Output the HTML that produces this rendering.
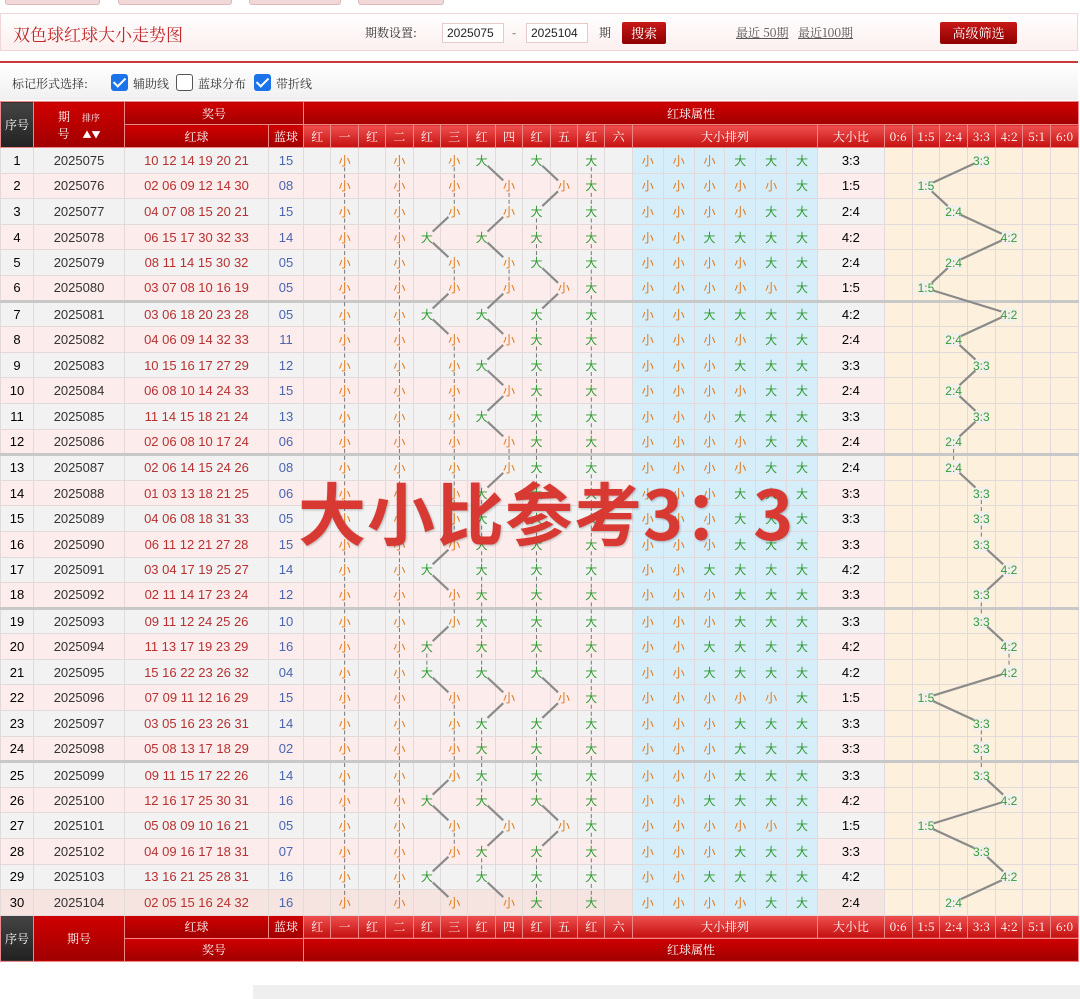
<!DOCTYPE html>
<html><head><meta charset="utf-8">
<style>
*{margin:0;padding:0;box-sizing:border-box}
body{width:1080px;height:999px;background:#fff;font-family:"Liberation Sans","Noto Sans CJK SC",sans-serif;position:relative;overflow:hidden}
.tab{position:absolute;top:0;height:5px;background:#f0d8d8;border:1px solid #e0b8b8;border-top:none;border-radius:0 0 3px 3px}
.top{position:absolute;left:0;top:13px;width:1078px;height:38px;border:1px solid #f0d6d6;background:linear-gradient(#fff,#fcefef);font-family:"Noto Serif CJK SC",serif}
.title{position:absolute;left:12px;top:7px;font-size:17px;color:#c0282a}
.lbl{position:absolute;top:10px;font-size:12px;color:#333}
.inp{position:absolute;top:9px;height:20px;width:62px;border:1px solid #e6caca;background:#fff;font:12px "Liberation Sans",sans-serif;color:#222;padding:2px 0 0 4px}
.btn{position:absolute;top:8px;height:22px;background:linear-gradient(#c81818,#8e0000);color:#fff;font-size:13px;text-align:center;line-height:21px;border-radius:2px}
.lk{position:absolute;top:10px;font-size:12px;color:#555;text-decoration:underline}
.redline{position:absolute;left:0;top:61px;width:1078px;height:2px;background:#c83a3a}
.opt{position:absolute;left:0;top:64px;width:1078px;height:36px;background:linear-gradient(#fff,#f0f0f0);font-family:"Noto Serif CJK SC",serif;font-size:12px;color:#333}
.cb{position:absolute;top:10px;width:17px;height:17px;border-radius:3px}
.cb.on{background:#1a73e8}
.cb.on:after{content:"";position:absolute;left:5px;top:1px;width:5px;height:10px;border:solid #fff;border-width:0 2px 2px 0;transform:rotate(45deg)}
.cb.off{border:1px solid #555;background:#fff}
table{position:absolute;left:0;top:101px;width:1078px;border-collapse:collapse;table-layout:fixed;font-size:13px}
td,th{text-align:center;border:1px solid #e2dada;padding:0;white-space:nowrap;overflow:hidden}
th{color:#fff;font-weight:normal;font-family:"Noto Serif CJK SC",serif;font-size:12px;background:linear-gradient(#d00000,#a00000);border:1px solid #e88;height:23px}
th.l{background:linear-gradient(#f05050,#c41010)}
th.d{background:linear-gradient(#444,#222)}
tbody tr{height:25.6px}
tbody tr:nth-child(odd){background:#f2f2f2}
tbody tr:nth-child(even){background:#fcecec}
tbody tr.last{background:#f6e4e1}
tr.sep td{border-top:3px solid #c8c8c8}
td.q{color:#333}
td.r{color:#b83030}
td.b{color:#4a64b0}
.s{color:#e07a1c;font-size:12px}
.x{color:#2f9a2f;font-size:12px}
td.bl{background:#d6edfa}
td.rt{background:#fdf0dc}
td i{font-style:normal;color:#3a9a3a;font-size:12px;background:rgba(240,240,240,.8)}
.wm{position:absolute;left:298px;top:466px;font-size:68px;font-weight:bold;color:#d83a33;font-family:"Noto Sans CJK SC",sans-serif;letter-spacing:1px;text-shadow:1px 1px 2px rgba(0,0,0,.25);line-height:90px}
svg{position:absolute;left:0;top:0;pointer-events:none}
.bot{position:absolute;left:0;top:985px;width:1080px;height:14px;background:#efefef}
.bot div{width:253px;height:14px;background:#fff}
</style></head><body>
<div class="tab" style="left:5px;width:95px"></div><div class="tab" style="left:118px;width:114px"></div><div class="tab" style="left:249px;width:92px"></div><div class="tab" style="left:358px;width:86px"></div>
<div class="top"><div class="title">双色球红球大小走势图</div>
<div class="lbl" style="left:364px">期数设置:</div>
<div class="inp" style="left:441px">2025075</div>
<div class="lbl" style="left:511px">-</div>
<div class="inp" style="left:525px">2025104</div>
<div class="lbl" style="left:598px">期</div>
<div class="btn" style="left:621px;width:44px">搜索</div>
<div class="lk" style="left:735px">最近 50期</div><div class="lk" style="left:797px">最近100期</div>
<div class="btn" style="left:939px;width:77px">高级筛选</div></div>
<div class="redline"></div>
<div class="opt"><span style="position:absolute;left:12px;top:11px">标记形式选择:</span>
<div class="cb on" style="left:111px"></div><span style="position:absolute;left:133px;top:11px">辅助线</span>
<div class="cb off" style="left:176px"></div><span style="position:absolute;left:198px;top:11px">蓝球分布</span>
<div class="cb on" style="left:254px"></div><span style="position:absolute;left:276px;top:11px">带折线</span></div>
<table id="t">
<colgroup><col style="width:33px"><col style="width:91px"><col style="width:144px"><col style="width:35px">
<col span="12" style="width:27.42px"><col span="6" style="width:30.83px"><col style="width:67px"><col span="7" style="width:27.71px"></colgroup>
<thead>
<tr><th class="d" rowspan="2">序号</th><th rowspan="2">期<span style="font-size:9px;margin-left:12px">排序</span><br>号 <span style="font-size:9px;margin-left:10px">▲▼</span></th><th colspan="2">奖号</th><th colspan="26">红球属性</th></tr>
<tr><th>红球</th><th>蓝球</th><th class="l">红</th><th class="l">一</th><th class="l">红</th><th class="l">二</th><th class="l">红</th><th class="l">三</th><th class="l">红</th><th class="l">四</th><th class="l">红</th><th class="l">五</th><th class="l">红</th><th class="l">六</th><th class="l" colspan="6">大小排列</th><th class="l">大小比</th><th class="l">0:6</th><th class="l">1:5</th><th class="l">2:4</th><th class="l">3:3</th><th class="l">4:2</th><th class="l">5:1</th><th class="l">6:0</th></tr>
</thead>
<tbody id="tb">
<tr><td>1</td><td class="q">2025075</td><td class="r">10 12 14 19 20 21</td><td class="b">15</td><td></td><td class="s">小</td><td></td><td class="s">小</td><td></td><td class="s">小</td><td class="x">大</td><td></td><td class="x">大</td><td></td><td class="x">大</td><td></td><td class="bl s">小</td><td class="bl s">小</td><td class="bl s">小</td><td class="bl x">大</td><td class="bl x">大</td><td class="bl x">大</td><td>3:3</td><td class="rt"></td><td class="rt"></td><td class="rt"></td><td class="rt"><i>3:3</i></td><td class="rt"></td><td class="rt"></td><td class="rt"></td></tr>
<tr><td>2</td><td class="q">2025076</td><td class="r">02 06 09 12 14 30</td><td class="b">08</td><td></td><td class="s">小</td><td></td><td class="s">小</td><td></td><td class="s">小</td><td></td><td class="s">小</td><td></td><td class="s">小</td><td class="x">大</td><td></td><td class="bl s">小</td><td class="bl s">小</td><td class="bl s">小</td><td class="bl s">小</td><td class="bl s">小</td><td class="bl x">大</td><td>1:5</td><td class="rt"></td><td class="rt"><i>1:5</i></td><td class="rt"></td><td class="rt"></td><td class="rt"></td><td class="rt"></td><td class="rt"></td></tr>
<tr><td>3</td><td class="q">2025077</td><td class="r">04 07 08 15 20 21</td><td class="b">15</td><td></td><td class="s">小</td><td></td><td class="s">小</td><td></td><td class="s">小</td><td></td><td class="s">小</td><td class="x">大</td><td></td><td class="x">大</td><td></td><td class="bl s">小</td><td class="bl s">小</td><td class="bl s">小</td><td class="bl s">小</td><td class="bl x">大</td><td class="bl x">大</td><td>2:4</td><td class="rt"></td><td class="rt"></td><td class="rt"><i>2:4</i></td><td class="rt"></td><td class="rt"></td><td class="rt"></td><td class="rt"></td></tr>
<tr><td>4</td><td class="q">2025078</td><td class="r">06 15 17 30 32 33</td><td class="b">14</td><td></td><td class="s">小</td><td></td><td class="s">小</td><td class="x">大</td><td></td><td class="x">大</td><td></td><td class="x">大</td><td></td><td class="x">大</td><td></td><td class="bl s">小</td><td class="bl s">小</td><td class="bl x">大</td><td class="bl x">大</td><td class="bl x">大</td><td class="bl x">大</td><td>4:2</td><td class="rt"></td><td class="rt"></td><td class="rt"></td><td class="rt"></td><td class="rt"><i>4:2</i></td><td class="rt"></td><td class="rt"></td></tr>
<tr><td>5</td><td class="q">2025079</td><td class="r">08 11 14 15 30 32</td><td class="b">05</td><td></td><td class="s">小</td><td></td><td class="s">小</td><td></td><td class="s">小</td><td></td><td class="s">小</td><td class="x">大</td><td></td><td class="x">大</td><td></td><td class="bl s">小</td><td class="bl s">小</td><td class="bl s">小</td><td class="bl s">小</td><td class="bl x">大</td><td class="bl x">大</td><td>2:4</td><td class="rt"></td><td class="rt"></td><td class="rt"><i>2:4</i></td><td class="rt"></td><td class="rt"></td><td class="rt"></td><td class="rt"></td></tr>
<tr><td>6</td><td class="q">2025080</td><td class="r">03 07 08 10 16 19</td><td class="b">05</td><td></td><td class="s">小</td><td></td><td class="s">小</td><td></td><td class="s">小</td><td></td><td class="s">小</td><td></td><td class="s">小</td><td class="x">大</td><td></td><td class="bl s">小</td><td class="bl s">小</td><td class="bl s">小</td><td class="bl s">小</td><td class="bl s">小</td><td class="bl x">大</td><td>1:5</td><td class="rt"></td><td class="rt"><i>1:5</i></td><td class="rt"></td><td class="rt"></td><td class="rt"></td><td class="rt"></td><td class="rt"></td></tr>
<tr class="sep"><td>7</td><td class="q">2025081</td><td class="r">03 06 18 20 23 28</td><td class="b">05</td><td></td><td class="s">小</td><td></td><td class="s">小</td><td class="x">大</td><td></td><td class="x">大</td><td></td><td class="x">大</td><td></td><td class="x">大</td><td></td><td class="bl s">小</td><td class="bl s">小</td><td class="bl x">大</td><td class="bl x">大</td><td class="bl x">大</td><td class="bl x">大</td><td>4:2</td><td class="rt"></td><td class="rt"></td><td class="rt"></td><td class="rt"></td><td class="rt"><i>4:2</i></td><td class="rt"></td><td class="rt"></td></tr>
<tr><td>8</td><td class="q">2025082</td><td class="r">04 06 09 14 32 33</td><td class="b">11</td><td></td><td class="s">小</td><td></td><td class="s">小</td><td></td><td class="s">小</td><td></td><td class="s">小</td><td class="x">大</td><td></td><td class="x">大</td><td></td><td class="bl s">小</td><td class="bl s">小</td><td class="bl s">小</td><td class="bl s">小</td><td class="bl x">大</td><td class="bl x">大</td><td>2:4</td><td class="rt"></td><td class="rt"></td><td class="rt"><i>2:4</i></td><td class="rt"></td><td class="rt"></td><td class="rt"></td><td class="rt"></td></tr>
<tr><td>9</td><td class="q">2025083</td><td class="r">10 15 16 17 27 29</td><td class="b">12</td><td></td><td class="s">小</td><td></td><td class="s">小</td><td></td><td class="s">小</td><td class="x">大</td><td></td><td class="x">大</td><td></td><td class="x">大</td><td></td><td class="bl s">小</td><td class="bl s">小</td><td class="bl s">小</td><td class="bl x">大</td><td class="bl x">大</td><td class="bl x">大</td><td>3:3</td><td class="rt"></td><td class="rt"></td><td class="rt"></td><td class="rt"><i>3:3</i></td><td class="rt"></td><td class="rt"></td><td class="rt"></td></tr>
<tr><td>10</td><td class="q">2025084</td><td class="r">06 08 10 14 24 33</td><td class="b">15</td><td></td><td class="s">小</td><td></td><td class="s">小</td><td></td><td class="s">小</td><td></td><td class="s">小</td><td class="x">大</td><td></td><td class="x">大</td><td></td><td class="bl s">小</td><td class="bl s">小</td><td class="bl s">小</td><td class="bl s">小</td><td class="bl x">大</td><td class="bl x">大</td><td>2:4</td><td class="rt"></td><td class="rt"></td><td class="rt"><i>2:4</i></td><td class="rt"></td><td class="rt"></td><td class="rt"></td><td class="rt"></td></tr>
<tr><td>11</td><td class="q">2025085</td><td class="r">11 14 15 18 21 24</td><td class="b">13</td><td></td><td class="s">小</td><td></td><td class="s">小</td><td></td><td class="s">小</td><td class="x">大</td><td></td><td class="x">大</td><td></td><td class="x">大</td><td></td><td class="bl s">小</td><td class="bl s">小</td><td class="bl s">小</td><td class="bl x">大</td><td class="bl x">大</td><td class="bl x">大</td><td>3:3</td><td class="rt"></td><td class="rt"></td><td class="rt"></td><td class="rt"><i>3:3</i></td><td class="rt"></td><td class="rt"></td><td class="rt"></td></tr>
<tr><td>12</td><td class="q">2025086</td><td class="r">02 06 08 10 17 24</td><td class="b">06</td><td></td><td class="s">小</td><td></td><td class="s">小</td><td></td><td class="s">小</td><td></td><td class="s">小</td><td class="x">大</td><td></td><td class="x">大</td><td></td><td class="bl s">小</td><td class="bl s">小</td><td class="bl s">小</td><td class="bl s">小</td><td class="bl x">大</td><td class="bl x">大</td><td>2:4</td><td class="rt"></td><td class="rt"></td><td class="rt"><i>2:4</i></td><td class="rt"></td><td class="rt"></td><td class="rt"></td><td class="rt"></td></tr>
<tr class="sep"><td>13</td><td class="q">2025087</td><td class="r">02 06 14 15 24 26</td><td class="b">08</td><td></td><td class="s">小</td><td></td><td class="s">小</td><td></td><td class="s">小</td><td></td><td class="s">小</td><td class="x">大</td><td></td><td class="x">大</td><td></td><td class="bl s">小</td><td class="bl s">小</td><td class="bl s">小</td><td class="bl s">小</td><td class="bl x">大</td><td class="bl x">大</td><td>2:4</td><td class="rt"></td><td class="rt"></td><td class="rt"><i>2:4</i></td><td class="rt"></td><td class="rt"></td><td class="rt"></td><td class="rt"></td></tr>
<tr><td>14</td><td class="q">2025088</td><td class="r">01 03 13 18 21 25</td><td class="b">06</td><td></td><td class="s">小</td><td></td><td class="s">小</td><td></td><td class="s">小</td><td class="x">大</td><td></td><td class="x">大</td><td></td><td class="x">大</td><td></td><td class="bl s">小</td><td class="bl s">小</td><td class="bl s">小</td><td class="bl x">大</td><td class="bl x">大</td><td class="bl x">大</td><td>3:3</td><td class="rt"></td><td class="rt"></td><td class="rt"></td><td class="rt"><i>3:3</i></td><td class="rt"></td><td class="rt"></td><td class="rt"></td></tr>
<tr><td>15</td><td class="q">2025089</td><td class="r">04 06 08 18 31 33</td><td class="b">05</td><td></td><td class="s">小</td><td></td><td class="s">小</td><td></td><td class="s">小</td><td class="x">大</td><td></td><td class="x">大</td><td></td><td class="x">大</td><td></td><td class="bl s">小</td><td class="bl s">小</td><td class="bl s">小</td><td class="bl x">大</td><td class="bl x">大</td><td class="bl x">大</td><td>3:3</td><td class="rt"></td><td class="rt"></td><td class="rt"></td><td class="rt"><i>3:3</i></td><td class="rt"></td><td class="rt"></td><td class="rt"></td></tr>
<tr><td>16</td><td class="q">2025090</td><td class="r">06 11 12 21 27 28</td><td class="b">15</td><td></td><td class="s">小</td><td></td><td class="s">小</td><td></td><td class="s">小</td><td class="x">大</td><td></td><td class="x">大</td><td></td><td class="x">大</td><td></td><td class="bl s">小</td><td class="bl s">小</td><td class="bl s">小</td><td class="bl x">大</td><td class="bl x">大</td><td class="bl x">大</td><td>3:3</td><td class="rt"></td><td class="rt"></td><td class="rt"></td><td class="rt"><i>3:3</i></td><td class="rt"></td><td class="rt"></td><td class="rt"></td></tr>
<tr><td>17</td><td class="q">2025091</td><td class="r">03 04 17 19 25 27</td><td class="b">14</td><td></td><td class="s">小</td><td></td><td class="s">小</td><td class="x">大</td><td></td><td class="x">大</td><td></td><td class="x">大</td><td></td><td class="x">大</td><td></td><td class="bl s">小</td><td class="bl s">小</td><td class="bl x">大</td><td class="bl x">大</td><td class="bl x">大</td><td class="bl x">大</td><td>4:2</td><td class="rt"></td><td class="rt"></td><td class="rt"></td><td class="rt"></td><td class="rt"><i>4:2</i></td><td class="rt"></td><td class="rt"></td></tr>
<tr><td>18</td><td class="q">2025092</td><td class="r">02 11 14 17 23 24</td><td class="b">12</td><td></td><td class="s">小</td><td></td><td class="s">小</td><td></td><td class="s">小</td><td class="x">大</td><td></td><td class="x">大</td><td></td><td class="x">大</td><td></td><td class="bl s">小</td><td class="bl s">小</td><td class="bl s">小</td><td class="bl x">大</td><td class="bl x">大</td><td class="bl x">大</td><td>3:3</td><td class="rt"></td><td class="rt"></td><td class="rt"></td><td class="rt"><i>3:3</i></td><td class="rt"></td><td class="rt"></td><td class="rt"></td></tr>
<tr class="sep"><td>19</td><td class="q">2025093</td><td class="r">09 11 12 24 25 26</td><td class="b">10</td><td></td><td class="s">小</td><td></td><td class="s">小</td><td></td><td class="s">小</td><td class="x">大</td><td></td><td class="x">大</td><td></td><td class="x">大</td><td></td><td class="bl s">小</td><td class="bl s">小</td><td class="bl s">小</td><td class="bl x">大</td><td class="bl x">大</td><td class="bl x">大</td><td>3:3</td><td class="rt"></td><td class="rt"></td><td class="rt"></td><td class="rt"><i>3:3</i></td><td class="rt"></td><td class="rt"></td><td class="rt"></td></tr>
<tr><td>20</td><td class="q">2025094</td><td class="r">11 13 17 19 23 29</td><td class="b">16</td><td></td><td class="s">小</td><td></td><td class="s">小</td><td class="x">大</td><td></td><td class="x">大</td><td></td><td class="x">大</td><td></td><td class="x">大</td><td></td><td class="bl s">小</td><td class="bl s">小</td><td class="bl x">大</td><td class="bl x">大</td><td class="bl x">大</td><td class="bl x">大</td><td>4:2</td><td class="rt"></td><td class="rt"></td><td class="rt"></td><td class="rt"></td><td class="rt"><i>4:2</i></td><td class="rt"></td><td class="rt"></td></tr>
<tr><td>21</td><td class="q">2025095</td><td class="r">15 16 22 23 26 32</td><td class="b">04</td><td></td><td class="s">小</td><td></td><td class="s">小</td><td class="x">大</td><td></td><td class="x">大</td><td></td><td class="x">大</td><td></td><td class="x">大</td><td></td><td class="bl s">小</td><td class="bl s">小</td><td class="bl x">大</td><td class="bl x">大</td><td class="bl x">大</td><td class="bl x">大</td><td>4:2</td><td class="rt"></td><td class="rt"></td><td class="rt"></td><td class="rt"></td><td class="rt"><i>4:2</i></td><td class="rt"></td><td class="rt"></td></tr>
<tr><td>22</td><td class="q">2025096</td><td class="r">07 09 11 12 16 29</td><td class="b">15</td><td></td><td class="s">小</td><td></td><td class="s">小</td><td></td><td class="s">小</td><td></td><td class="s">小</td><td></td><td class="s">小</td><td class="x">大</td><td></td><td class="bl s">小</td><td class="bl s">小</td><td class="bl s">小</td><td class="bl s">小</td><td class="bl s">小</td><td class="bl x">大</td><td>1:5</td><td class="rt"></td><td class="rt"><i>1:5</i></td><td class="rt"></td><td class="rt"></td><td class="rt"></td><td class="rt"></td><td class="rt"></td></tr>
<tr><td>23</td><td class="q">2025097</td><td class="r">03 05 16 23 26 31</td><td class="b">14</td><td></td><td class="s">小</td><td></td><td class="s">小</td><td></td><td class="s">小</td><td class="x">大</td><td></td><td class="x">大</td><td></td><td class="x">大</td><td></td><td class="bl s">小</td><td class="bl s">小</td><td class="bl s">小</td><td class="bl x">大</td><td class="bl x">大</td><td class="bl x">大</td><td>3:3</td><td class="rt"></td><td class="rt"></td><td class="rt"></td><td class="rt"><i>3:3</i></td><td class="rt"></td><td class="rt"></td><td class="rt"></td></tr>
<tr><td>24</td><td class="q">2025098</td><td class="r">05 08 13 17 18 29</td><td class="b">02</td><td></td><td class="s">小</td><td></td><td class="s">小</td><td></td><td class="s">小</td><td class="x">大</td><td></td><td class="x">大</td><td></td><td class="x">大</td><td></td><td class="bl s">小</td><td class="bl s">小</td><td class="bl s">小</td><td class="bl x">大</td><td class="bl x">大</td><td class="bl x">大</td><td>3:3</td><td class="rt"></td><td class="rt"></td><td class="rt"></td><td class="rt"><i>3:3</i></td><td class="rt"></td><td class="rt"></td><td class="rt"></td></tr>
<tr class="sep"><td>25</td><td class="q">2025099</td><td class="r">09 11 15 17 22 26</td><td class="b">14</td><td></td><td class="s">小</td><td></td><td class="s">小</td><td></td><td class="s">小</td><td class="x">大</td><td></td><td class="x">大</td><td></td><td class="x">大</td><td></td><td class="bl s">小</td><td class="bl s">小</td><td class="bl s">小</td><td class="bl x">大</td><td class="bl x">大</td><td class="bl x">大</td><td>3:3</td><td class="rt"></td><td class="rt"></td><td class="rt"></td><td class="rt"><i>3:3</i></td><td class="rt"></td><td class="rt"></td><td class="rt"></td></tr>
<tr><td>26</td><td class="q">2025100</td><td class="r">12 16 17 25 30 31</td><td class="b">16</td><td></td><td class="s">小</td><td></td><td class="s">小</td><td class="x">大</td><td></td><td class="x">大</td><td></td><td class="x">大</td><td></td><td class="x">大</td><td></td><td class="bl s">小</td><td class="bl s">小</td><td class="bl x">大</td><td class="bl x">大</td><td class="bl x">大</td><td class="bl x">大</td><td>4:2</td><td class="rt"></td><td class="rt"></td><td class="rt"></td><td class="rt"></td><td class="rt"><i>4:2</i></td><td class="rt"></td><td class="rt"></td></tr>
<tr><td>27</td><td class="q">2025101</td><td class="r">05 08 09 10 16 21</td><td class="b">05</td><td></td><td class="s">小</td><td></td><td class="s">小</td><td></td><td class="s">小</td><td></td><td class="s">小</td><td></td><td class="s">小</td><td class="x">大</td><td></td><td class="bl s">小</td><td class="bl s">小</td><td class="bl s">小</td><td class="bl s">小</td><td class="bl s">小</td><td class="bl x">大</td><td>1:5</td><td class="rt"></td><td class="rt"><i>1:5</i></td><td class="rt"></td><td class="rt"></td><td class="rt"></td><td class="rt"></td><td class="rt"></td></tr>
<tr><td>28</td><td class="q">2025102</td><td class="r">04 09 16 17 18 31</td><td class="b">07</td><td></td><td class="s">小</td><td></td><td class="s">小</td><td></td><td class="s">小</td><td class="x">大</td><td></td><td class="x">大</td><td></td><td class="x">大</td><td></td><td class="bl s">小</td><td class="bl s">小</td><td class="bl s">小</td><td class="bl x">大</td><td class="bl x">大</td><td class="bl x">大</td><td>3:3</td><td class="rt"></td><td class="rt"></td><td class="rt"></td><td class="rt"><i>3:3</i></td><td class="rt"></td><td class="rt"></td><td class="rt"></td></tr>
<tr><td>29</td><td class="q">2025103</td><td class="r">13 16 21 25 28 31</td><td class="b">16</td><td></td><td class="s">小</td><td></td><td class="s">小</td><td class="x">大</td><td></td><td class="x">大</td><td></td><td class="x">大</td><td></td><td class="x">大</td><td></td><td class="bl s">小</td><td class="bl s">小</td><td class="bl x">大</td><td class="bl x">大</td><td class="bl x">大</td><td class="bl x">大</td><td>4:2</td><td class="rt"></td><td class="rt"></td><td class="rt"></td><td class="rt"></td><td class="rt"><i>4:2</i></td><td class="rt"></td><td class="rt"></td></tr>
<tr class="last"><td>30</td><td class="q">2025104</td><td class="r">02 05 15 16 24 32</td><td class="b">16</td><td></td><td class="s">小</td><td></td><td class="s">小</td><td></td><td class="s">小</td><td></td><td class="s">小</td><td class="x">大</td><td></td><td class="x">大</td><td></td><td class="bl s">小</td><td class="bl s">小</td><td class="bl s">小</td><td class="bl s">小</td><td class="bl x">大</td><td class="bl x">大</td><td>2:4</td><td class="rt"></td><td class="rt"></td><td class="rt"><i>2:4</i></td><td class="rt"></td><td class="rt"></td><td class="rt"></td><td class="rt"></td></tr>
</tbody>
<tfoot>
<tr><th class="d" rowspan="2">序号</th><th rowspan="2">期号</th><th>红球</th><th>蓝球</th><th class="l">红</th><th class="l">一</th><th class="l">红</th><th class="l">二</th><th class="l">红</th><th class="l">三</th><th class="l">红</th><th class="l">四</th><th class="l">红</th><th class="l">五</th><th class="l">红</th><th class="l">六</th><th class="l" colspan="6">大小排列</th><th class="l">大小比</th><th class="l">0:6</th><th class="l">1:5</th><th class="l">2:4</th><th class="l">3:3</th><th class="l">4:2</th><th class="l">5:1</th><th class="l">6:0</th></tr>
<tr><th colspan="2">奖号</th><th colspan="26">红球属性</th></tr>
</tfoot>
</table>
<svg id="sv" width="1080" height="999"></svg>
<div class="wm">大小比参考3：3</div>
<div class="bot"><div></div></div>
<script>
(function(){
var rows=document.querySelectorAll('#tb tr'),sv=document.getElementById('sv'),ns='http://www.w3.org/2000/svg';
function c(el){var r=el.getBoundingClientRect();return[r.left+r.width/2,r.top+r.height/2];}
function seg(a,b){var dx=b[0]-a[0],dy=b[1]-a[1],L=Math.hypot(dx,dy);if(L<1)return;var k=(Math.abs(dx)<1)?7:8;var ux=dx/L,uy=dy/L;var l=document.createElementNS(ns,'line');l.setAttribute('x1',a[0]+ux*k);l.setAttribute('y1',a[1]+uy*k);l.setAttribute('x2',b[0]-ux*k);l.setAttribute('y2',b[1]-uy*k);if(Math.abs(dx)<1){l.setAttribute('stroke','#777');l.setAttribute('stroke-width','1');l.setAttribute('stroke-dasharray','4,3');}else{l.setAttribute('stroke','#8a8a8a');l.setAttribute('stroke-width','2.2');}sv.appendChild(l);}
for(var p=0;p<6;p++){var prev=null;for(var i=0;i<rows.length;i++){var td=rows[i].children;var a=td[4+2*p],b=td[5+2*p];var e=a.textContent?a:b;var pt=c(e);if(prev)seg(prev,pt);prev=pt;}}
var prev=null;for(var i=0;i<rows.length;i++){var e=rows[i].querySelector('i');var pt=c(e.parentNode);if(prev)seg(prev,pt);prev=pt;}
})();
</script>
</body></html>
